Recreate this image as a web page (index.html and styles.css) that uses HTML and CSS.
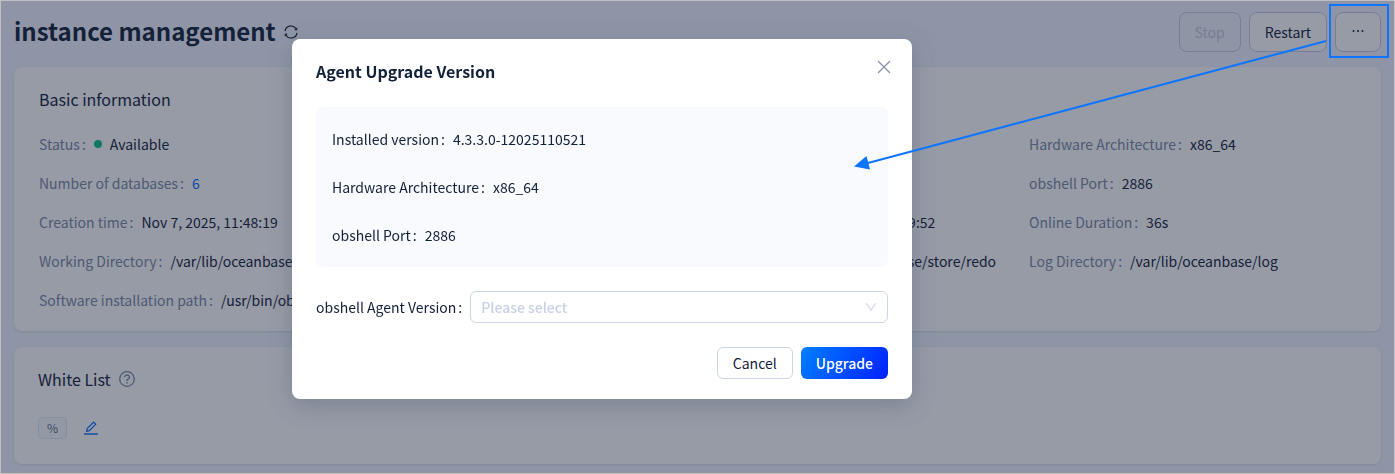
FILE: index.html
```html
<!DOCTYPE html>
<html lang="en">
<head>
	<meta charset="utf-8">
	<title>instance management</title>
	<link rel="stylesheet" href="styles.css">
</head>
<body>
	<main class="page">
		<header class="page-header">
			<h1 class="page-title">instance management</h1>
			<button class="icon-btn" type="button" aria-label="Refresh">
				<svg width="14" height="14" viewBox="0 0 14 14" fill="none" stroke="currentColor" stroke-width="1.2">
					<path d="M1 6.200A6 6 0 0 1 12 3.800M13 7.800A6 6 0 0 1 2 10.200"/>
					<path d="M13.200 2.200v3h-3zM.8 11.800v-3h3z" fill="currentColor" stroke="none"/>
				</svg>
			</button>
			<div class="actions">
				<button class="btn btn-large" type="button" disabled>Stop</button>
				<button class="btn btn-large" type="button">Restart</button>
				<button class="btn btn-large btn-more" type="button" aria-label="More">
					<svg width="14" height="14" viewBox="0 0 14 14" fill="currentColor">
						<circle cx="2.5" cy="6" r="1"/><circle cx="7" cy="6" r="1"/><circle cx="11.5" cy="6" r="1"/>
					</svg>
				</button>
			</div>
		</header>

		<section class="card">
			<h2 class="card-title">Basic information</h2>
			<div class="info">
				<dl class="info-col">
					<div class="item"><dt>Status</dt><dd><span class="dot"></span>Available</dd></div>
					<div class="item"><dt>Number of databases</dt><dd><a href="#">6</a></dd></div>
					<div class="item"><dt>Creation time</dt><dd>Nov 7, 2025, 11:48:19</dd></div>
					<div class="item"><dt>Working Directory</dt><dd>/var/lib/oceanbase</dd></div>
					<div class="item"><dt>Software installation path</dt><dd>/usr/bin/obshell</dd></div>
				</dl>
				<dl class="info-col info-col-mid">
					<div class="item"><dt>Start-up time</dt><dd>Nov 7, 2025, 11:49:52</dd></div>
					<div class="item"><dt>Redo log disk</dt><dd>/var/lib/oceanbase/store/redo</dd></div>
				</dl>
				<dl class="info-col info-col-last">
					<div class="item"><dt>Hardware Architecture</dt><dd>x86_64</dd></div>
					<div class="item"><dt>obshell Port</dt><dd>2886</dd></div>
					<div class="item"><dt>Online Duration</dt><dd>36s</dd></div>
					<div class="item"><dt>Log Directory</dt><dd>/var/lib/oceanbase/log</dd></div>
				</dl>
			</div>
		</section>

		<section class="card card-list">
			<h2 class="card-title">White List
				<svg class="help" width="16" height="16" viewBox="0 0 16 16" fill="none" stroke="currentColor" stroke-width="1.3">
					<circle cx="8" cy="8" r="7.300"/>
					<path d="M5.500 6.200a2.500 2.200 0 1 1 3.600 2c-.8.400-1.100.8-1.100 1.400v.5"/>
					<circle cx="8" cy="11.900" r=".8" fill="currentColor" stroke="none"/>
				</svg>
			</h2>
			<div class="tags">
				<span class="tag">%</span>
				<a class="edit" href="#" aria-label="Edit">
					<svg width="14" height="14" viewBox="0 0 14 14" fill="none" stroke="currentColor" stroke-width="1.2">
						<path d="M2.7 10.2l.5-2.6L9.6 1.2l2.1 2.1-6.4 6.4z"/>
						<path d="M0 13h14" stroke-width="1.4"/>
					</svg>
				</a>
			</div>
		</section>
	</main>

	<div class="mask">
		<div class="modal" role="dialog" aria-labelledby="modal-title">
			<div class="modal-header">
				<h2 class="modal-title" id="modal-title">Agent Upgrade Version</h2>
				<button class="icon-btn close" type="button" aria-label="Close">
					<svg width="14" height="14" viewBox="0 0 14 14" fill="none" stroke="currentColor" stroke-width="1.3">
						<path d="M1 1l12 12M13 1L1 13"/>
					</svg>
				</button>
			</div>
			<dl class="panel">
				<div class="item"><dt>Installed version</dt><dd>4.3.3.0-12025110521</dd></div>
				<div class="item"><dt>Hardware Architecture</dt><dd>x86_64</dd></div>
				<div class="item"><dt>obshell Port</dt><dd>2886</dd></div>
			</dl>
			<div class="field">
				<label for="version">obshell Agent Version</label>
				<div class="select">
					<select id="version">
						<option value="">Please select</option>
					</select>
					<svg width="12" height="12" viewBox="0 0 12 12" fill="none" stroke="currentColor" stroke-width="1.1">
						<path d="M1.2 2.2L6 9l4.800-6.800"/>
					</svg>
				</div>
			</div>
			<div class="modal-footer">
				<button class="btn" type="button">Cancel</button>
				<button class="btn btn-primary" type="button">Upgrade</button>
			</div>
		</div>
	</div>

	<!-- callout from the "more" button to the dialog -->
	<svg class="callout" width="545" height="180" viewBox="0 0 545 180" fill="none" stroke="#0d75ff">
		<rect x="480" y="5" width="58" height="52" stroke-width="2"/>
		<path d="M476 41L18 163" stroke-width="2"/>
		<path d="M4 166.500L16.500 156l3.500 13.500z" fill="#0d75ff" stroke="none"/>
	</svg>
</body>
</html>
```
FILE: styles.css
```css
* {
	box-sizing: border-box;
}
body {
	margin: 0;
	background: #f0f5ff;
	color: #132039;
	font: 14px/22px "Noto Sans CJK SC", sans-serif;
}
h1, h2, dl, dd {
	margin: 0;
}
a {
	color: #006aff;
	text-decoration: none;
}
svg {
	display: block;
}

/* page */
.page {
	padding: 12px 14px 10px;
}
.page-header {
	display: flex;
	align-items: center;
	height: 40px;
}
.page-title {
	padding-bottom: 2px;
	font-size: 24px;
	line-height: 32px;
	font-weight: 700;
}
.icon-btn {
	margin-left: 8px;
	padding: 0;
	border: 0;
	background: none;
	color: inherit;
}
.actions {
	display: flex;
	gap: 8px;
	margin-left: auto;
}
.btn {
	height: 32px;
	padding: 0 15px;
	border: 1px solid #cdd5e4;
	border-radius: 6px;
	background: #fff;
	color: #132039;
	font: inherit;
}
.btn-large {
	height: 40px;
	border-color: #c4cde0;
	border-radius: 8px;
}
.btn:disabled {
	background: #f0f4fc;
	color: #c1cbe0;
}
.btn-primary {
	border: 0;
	background: linear-gradient(120deg, #0080ff, #0020ff);
	color: #fff;
	font-weight: 500;
}
.card {
	margin-top: 15px;
	padding: 21px 22px 20px 25px;
	border-radius: 8px;
	background: #fff;
	box-shadow: 0 1px 3px rgba(19, 32, 57, 0.12);
}
.card-title {
	display: flex;
	align-items: center;
	gap: 8px;
	font-size: 16px;
	line-height: 22px;
	font-weight: 400;
}
.info {
	display: grid;
	grid-template-columns: repeat(4, 1fr);
	margin-top: 23px;
}
.info-col {
	display: flex;
	flex-direction: column;
	gap: 17px;
	white-space: nowrap;
}
.info-col-mid {
	grid-column: 3;
	padding-top: 78px;
}
.info-col-last {
	grid-column: 4;
}
.item {
	display: flex;
}
.item dt::after,
.field label::after {
	content: ":";
	margin: 0 8px 0 2px;
}
.info dt {
	color: #7a88a5;
}
.info dd {
	display: flex;
	align-items: center;
}
.dot {
	width: 8px;
	height: 8px;
	margin-right: 8px;
	border-radius: 50%;
	background: #0ac185;
}
.card-list {
	margin-top: 16px;
	padding: 21px 24px 25px;
}
.help {
	color: #7a88a5;
}
.tags {
	display: flex;
	align-items: center;
	gap: 17px;
	margin-top: 27px;
}
.tag {
	padding: 0 8px;
	border: 1px solid #e2e8f3;
	border-radius: 4px;
	background: #f8fafe;
	color: #5c6b8a;
	font-size: 12px;
	line-height: 20px;
}

/* dialog */
.mask {
	position: fixed;
	inset: 0;
	padding: 38px 24px 0 291px;
	border: 1px solid #c0c0c0;
	background: rgba(24, 33, 57, 0.45);
}
.modal {
	max-width: 620px;
	padding: 19px 24px 20px;
	border-radius: 8px;
	background: #fff;
	box-shadow: 0 6px 24px rgba(54, 69, 99, 0.3);
}
.modal-header {
	display: flex;
	justify-content: space-between;
	height: 49px;
}
.modal-title {
	font-size: 16px;
	line-height: 26px;
	font-weight: 700;
}
.close {
	height: 18px;
	margin-right: -3px;
	color: #8592ad;
}
.panel {
	display: flex;
	flex-direction: column;
	gap: 26px;
	padding: 21px 16px;
	border-radius: 6px;
	background: #f8fafe;
}
.field {
	display: flex;
	align-items: center;
	margin: 24px 0;
}
.select {
	display: flex;
	align-items: center;
	flex: 1;
	color: #cdd5e4;
}
.select select {
	flex: 1;
	height: 32px;
	padding: 0 30px 0 10px;
	border: 1px solid #cdd5e4;
	border-radius: 6px;
	background: #fff;
	color: #c8d2e6;
	font: inherit;
	font-weight: 500;
	appearance: none;
}
.select svg {
	margin-left: -23px;
	margin-right: 11px;
	pointer-events: none;
}
.modal-footer {
	display: flex;
	justify-content: flex-end;
	gap: 8px;
}

.callout {
	position: absolute;
	top: 0;
	right: 0;
	pointer-events: none;
}
```
